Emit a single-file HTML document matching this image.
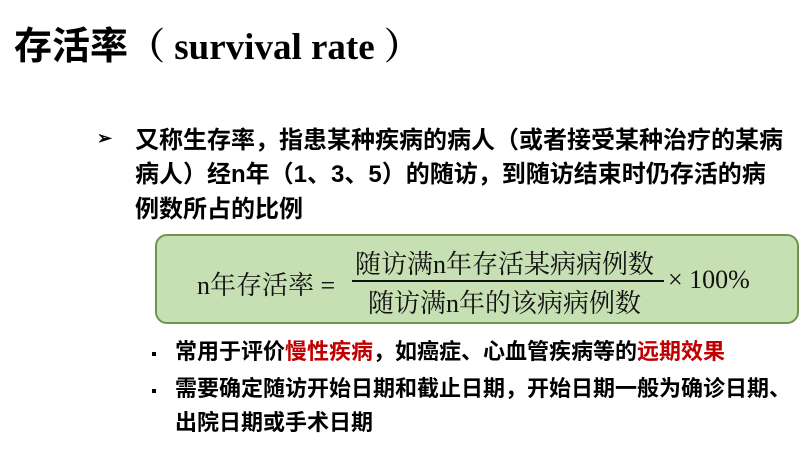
<!DOCTYPE html>
<html><head><meta charset="utf-8"><style>
body{margin:0;width:812px;height:454px;background:#fff;position:relative;overflow:hidden;font-family:"Liberation Sans","Noto Sans CJK SC",sans-serif;color:#000}
.a{position:absolute;white-space:nowrap}
.t{left:14px;top:15px;font-size:38px;font-weight:bold}
.t .e{font-family:"Liberation Serif","Noto Serif CJK SC",serif;font-size:37px}
.p{left:135px;font-size:24px;font-weight:bold;line-height:34px}
.box{position:absolute;left:155px;top:234px;width:644px;height:90px;background:#c6e0b4;border:2px solid #70934f;border-radius:12px;box-sizing:border-box}
.f{font-family:"Liberation Serif","Noto Serif CJK SC",serif;font-size:26px;color:#111}
.s{left:175px;font-size:22px;font-weight:bold;line-height:33px}
.r{color:#c00000}
.d{position:absolute;width:4px;height:4px;background:#000;left:152px}
</style></head><body>
<div class="a t">存活率<span class="e">（ survival rate ）</span></div>
<div class="a" style="left:97px;top:128px;font-size:18px;font-weight:bold">➢</div>
<div class="a p" style="top:124px">又称生存率，指患某种疾病的病人（或者接受某种治疗的某病</div>
<div class="a p" style="top:158px">病人）经n年（1、3、5）的随访，到随访结束时仍存活的病</div>
<div class="a p" style="top:193px">例数所占的比例</div>
<div class="box"></div>
<div class="a f" style="left:197px;top:265px">n年存活率 =</div>
<div class="a f" style="left:355px;top:244px">随访满n年存活某病病例数</div>
<div style="position:absolute;left:352px;top:280px;width:312px;height:2px;background:#111"></div>
<div class="a f" style="left:368px;top:283px">随访满n年的该病病例数</div>
<div class="a f" style="left:668px;top:265px">× 100%</div>
<div class="d" style="top:352px"></div>
<div class="a s" style="top:335px">常用于评价<span class="r">慢性疾病</span>，如癌症、心血管疾病等的<span class="r">远期效果</span></div>
<div class="d" style="top:389px"></div>
<div class="a s" style="top:372px">需要确定随访开始日期和截止日期，开始日期一般为确诊日期、</div>
<div class="a s" style="top:406px">出院日期或手术日期</div>
</body></html>
